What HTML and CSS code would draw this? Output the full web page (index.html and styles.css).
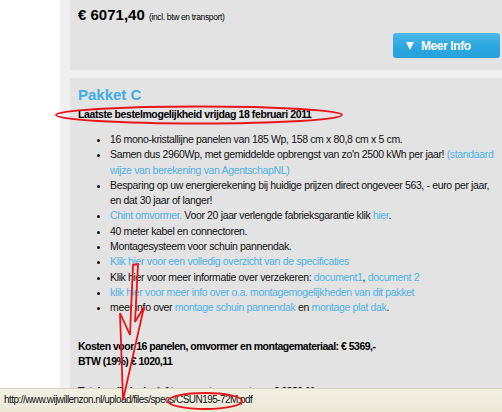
FILE: index.html
```html
<!DOCTYPE html>
<html lang="nl">
<head>
    <meta charset="UTF-8">
    <title>Pakket C</title>
    <link rel="stylesheet" href="styles.css">
</head>
<body>

    <!-- Page content -->
    <div class="page">
        <div class="panel price-panel">
            <div class="price">&euro; 6071,40 <span class="price-note">(incl. btw en transport)</span></div>
            <div class="price-actions">
                <a class="more-button" href="#"><span class="more-arrow"></span>Meer Info</a>
            </div>
        </div>

        <div class="panel package">
            <h2 class="package-title">Pakket C</h2>
            <p class="deadline">Laatste bestelmogelijkheid vrijdag 18 februari 2011</p>
            <ul class="features">
                <li>16 mono-kristallijne panelen van 185 Wp, 158 cm x 80,8 cm x 5 cm.</li>
                <li>Samen dus 2960Wp, met gemiddelde opbrengst van zo'n 2500 kWh per jaar! <a href="#">(standaard wijze van berekening van AgentschapNL)</a></li>
                <li>Besparing op uw energierekening bij huidige prijzen direct ongeveer 563, - euro per jaar, en dat 30 jaar of langer!</li>
                <li><a href="#">Chint omvormer.</a> Voor 20 jaar verlengde fabrieksgarantie klik <a href="#">hier</a>.</li>
                <li>40 meter kabel en connectoren.</li>
                <li>Montagesysteem voor schuin pannendak.</li>
                <li><a href="#">Klik hier voor een volledig overzicht van de specificaties</a></li>
                <li>Klik hier voor meer informatie over verzekeren: <a href="#">document1</a>, <a href="#">document 2</a></li>
                <li><a href="#">klik hier voor meer info over o.a. montagemogelijkheden van dit pakket</a></li>
                <li>meer info over <a href="#">montage schuin pannendak</a> en <a href="#">montage plat dak</a>.</li>
            </ul>
            <p class="costs">
                Kosten voor 16 panelen, omvormer en montagemateriaal: &euro; 5369,-<br>
                BTW (19%) &euro; 1020,11<br>
                <br>
                Totale prijs inclusief transport en montage: &euro; 6389,11
            </p>
        </div>
    </div>

    <!-- Browser status bar -->
    <div class="statusbar">http://www.wijwillenzon.nl/upload/files/specs/CSUN195-72M.pdf</div>

    <!-- Red annotations drawn over the screenshot -->
    <svg class="markup" width="502" height="412" viewBox="0 0 502 412">
        <ellipse cx="199" cy="115" rx="143" ry="8.5" />
        <ellipse cx="205" cy="401" rx="37" ry="8" />
        <polygon points="133,265 138,264 135,322 144,307 123,400 120,313 130,335" />
    </svg>

</body>
</html>
```

FILE: styles.css
```css
body {
    margin: 0;
    padding: 0;
    background-color: white;
    font-family: "Liberation Sans", Arial, sans-serif;
    font-size: 10.5px;
    letter-spacing: -0.35px;
    color: #111;
    overflow: hidden;
}
a {
    color: #4fb2e4;
    text-decoration: none;
}
.page {
    margin-left: 60px;
    padding-left: 10px;
    background-color: #f0f0f0;
    height: 412px;
}
.panel {
    background-color: #e3e3e3;
    padding: 0 2px 0 8px;
}
.price-panel {
    height: 70px;
    display: flex;
    flex-direction: column;
    margin-bottom: 8px;
}
.price {
    font-size: 15px;
    font-weight: bold;
    letter-spacing: 0;
    color: black;
    padding-top: 6px;
}
.price-note {
    font-size: 8.5px;
    font-weight: normal;
    letter-spacing: -0.35px;
}
.price-actions {
    display: flex;
    justify-content: flex-end;
    margin-top: 10px;
}
.more-button {
    display: flex;
    align-items: center;
    width: 107px;
    height: 25px;
    box-sizing: border-box;
    padding-left: 13px;
    border-radius: 3px;
    background: linear-gradient(#4cb9ea, #2ba6df 55%, #28a2dc);
    color: white;
    font-size: 12px;
    font-weight: bold;
    letter-spacing: -0.4px;
}
.more-arrow {
    width: 0;
    height: 0;
    border-left: 4.5px solid transparent;
    border-right: 4.5px solid transparent;
    border-top: 8px solid white;
    margin-right: 7px;
}
.package {
    padding-top: 8px;
    height: 400px;
}
.package-title {
    margin: 0;
    font-size: 15px;
    letter-spacing: 0;
    color: #41aee4;
}
.deadline {
    margin: 5px 0 12px;
    font-weight: bold;
    letter-spacing: -0.4px;
    color: black;
}
.features {
    margin: 0;
    padding-left: 32px;
    line-height: 15.3px;
}
.costs {
    margin: 23px 0 0;
    font-weight: bold;
    letter-spacing: -0.5px;
    color: black;
    line-height: 15px;
}
.statusbar {
    position: fixed;
    left: 0;
    right: 0;
    bottom: 0;
    height: 24px;
    box-sizing: border-box;
    padding: 5px 0 0 4px;
    background: linear-gradient(#f1efe4, #ece9d8);
    border-top: 1px solid #d8d4c4;
    font-size: 10px;
    letter-spacing: -0.55px;
    color: #111;
}
.markup {
    position: fixed;
    left: 0;
    top: 0;
    pointer-events: none;
}
.markup ellipse,
.markup polygon {
    fill: none;
    stroke: #e8141a;
    stroke-width: 1.8;
}
```
